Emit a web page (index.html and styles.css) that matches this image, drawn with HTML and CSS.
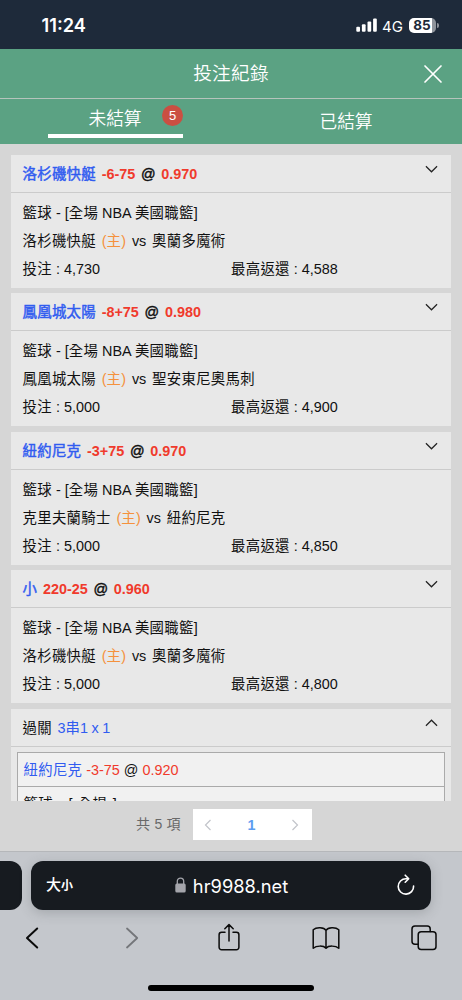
FILE: index.html
```
<!DOCTYPE html>
<html lang="zh-Hant">
<head>
<meta charset="utf-8">
<meta name="viewport" content="width=device-width, initial-scale=1">
<title>投注紀錄</title>
<link rel="stylesheet" href="styles.css">
</head>
<body>
<div class="phone">
  <div class="status">
    <span class="clock">11:24</span>
    <div class="status-right">
      <svg class="signal" width="22" height="14" viewBox="0 0 22 14" fill="#fff"><rect x="0.3" y="8.7" width="3.7" height="5" rx="1"/><rect x="5.9" y="6.2" width="3.7" height="7.5" rx="1"/><rect x="11.5" y="3.4" width="3.7" height="10.3" rx="1"/><rect x="17.1" y="0.4" width="3.7" height="13.3" rx="1"/></svg>
      <span class="network">4G</span>
      <div class="battery"><span class="level">85</span></div>
      <span class="battery-tip"></span>
    </div>
  </div>

  <header class="title-bar">
    <h1>投注紀錄</h1>
    <svg class="close" width="20" height="20" viewBox="0 0 20 20" fill="none" stroke="#fff" stroke-width="1.7" stroke-linecap="round"><path d="M2 2 18 18M18 2 2 18"/></svg>
  </header>
  <nav class="tabs">
    <div class="tab active"><span>未結算</span><span class="badge">5</span></div>
    <div class="tab"><span>已結算</span></div>
  </nav>

  <main class="list">
    <section class="card">
      <div class="card-head"><div class="pick"><span class="team blue">洛杉磯快艇</span> <b class="odds">-6-75</b> <span class="at">@</span> <b class="odds">0.970</b></div><svg class="chev" viewBox="0 0 14 8"><path d="M1 1 7 7 13 1"/></svg></div>
      <div class="card-body">
        <p><i>籃球</i> - [<i>全場</i> NBA <i>美國職籃</i>]</p>
        <p class="match"><i>洛杉磯快艇</i> <em>(<i>主</i>)</em> vs <i>奧蘭多魔術</i></p>
        <p class="money"><span><i>投注</i> : 4,730</span><span><i>最高返還</i> : 4,588</span></p>
      </div>
    </section>
    <section class="card">
      <div class="card-head"><div class="pick"><span class="team blue">鳳凰城太陽</span> <b class="odds">-8+75</b> <span class="at">@</span> <b class="odds">0.980</b></div><svg class="chev" viewBox="0 0 14 8"><path d="M1 1 7 7 13 1"/></svg></div>
      <div class="card-body">
        <p><i>籃球</i> - [<i>全場</i> NBA <i>美國職籃</i>]</p>
        <p class="match"><i>鳳凰城太陽</i> <em>(<i>主</i>)</em> vs <i>聖安東尼奧馬刺</i></p>
        <p class="money"><span><i>投注</i> : 5,000</span><span><i>最高返還</i> : 4,900</span></p>
      </div>
    </section>
    <section class="card">
      <div class="card-head"><div class="pick"><span class="team blue">紐約尼克</span> <b class="odds">-3+75</b> <span class="at">@</span> <b class="odds">0.970</b></div><svg class="chev" viewBox="0 0 14 8"><path d="M1 1 7 7 13 1"/></svg></div>
      <div class="card-body">
        <p><i>籃球</i> - [<i>全場</i> NBA <i>美國職籃</i>]</p>
        <p class="match"><i>克里夫蘭騎士</i> <em>(<i>主</i>)</em> vs <i>紐約尼克</i></p>
        <p class="money"><span><i>投注</i> : 5,000</span><span><i>最高返還</i> : 4,850</span></p>
      </div>
    </section>
    <section class="card">
      <div class="card-head"><div class="pick"><span class="team blue">小</span> <b class="odds">220-25</b> <span class="at">@</span> <b class="odds">0.960</b></div><svg class="chev" viewBox="0 0 14 8"><path d="M1 1 7 7 13 1"/></svg></div>
      <div class="card-body">
        <p><i>籃球</i> - [<i>全場</i> NBA <i>美國職籃</i>]</p>
        <p class="match"><i>洛杉磯快艇</i> <em>(<i>主</i>)</em> vs <i>奧蘭多魔術</i></p>
        <p class="money"><span><i>投注</i> : 5,000</span><span><i>最高返還</i> : 4,800</span></p>
      </div>
    </section>
    <section class="card parlay">
      <div class="card-head"><div class="pick"><i>過關</i> <span class="combo blue">3串1 x 1</span></div><svg class="chev" viewBox="0 0 14 8"><path d="M1 7 7 1 13 7"/></svg></div>
      <div class="legs">
        <div class="leg-head"><i class="blue">紐約尼克</i> <span class="odds">-3-75</span> @ <span class="odds">0.920</span></div>
        <div class="leg-body"><i>籃球</i> - [ <i>全場</i> ]</div>
      </div>
    </section>
  </main>

  <div class="pagination">
    <span class="total">共 5 項</span>
    <div class="pager">
      <svg width="8" height="12" viewBox="0 0 8 12"><path d="M6.5 1 1.5 6 6.5 11"/></svg>
      <span>1</span>
      <svg width="8" height="12" viewBox="0 0 8 12"><path d="M1.5 1 6.5 6 1.5 11"/></svg>
    </div>
  </div>

  <footer class="browser">
    <div class="address-row">
      <div class="prev-tab"></div>
      <div class="address">
        <span class="text-size">大<small>小</small></span>
        <span class="url"><svg width="11" height="16" viewBox="0 0 11 16"><rect x="0.3" y="6.5" width="10.4" height="9" rx="1.6" fill="#a4a5ab"/><path d="M2.3 7V4.3a3.2 3.2 0 0 1 6.4 0V7" fill="none" stroke="#a4a5ab" stroke-width="1.3"/></svg>hr9988.net</span>
        <svg class="reload" width="20" height="22" viewBox="0 0 20 22" fill="none" stroke="#fff" stroke-width="1.6" stroke-linecap="round" stroke-linejoin="round"><path d="M12.4 4.7H10A7.7 7.7 0 1 0 17.6 12M9.2 1.2 12.7 4.7 9.2 8.2"/></svg>
      </div>
    </div>
    <div class="toolbar">
      <svg width="26" height="30" viewBox="0 0 26 30" stroke-width="2"><path d="M18.2 5.5 8 15 18.2 24.5"/></svg>
      <svg class="dim" width="26" height="30" viewBox="0 0 26 30" stroke-width="1.8"><path d="M8 5.5 18.2 15 8 24.5"/></svg>
      <svg width="26" height="30" viewBox="0 0 26 30" stroke-width="1.5"><path d="M9 9.2H5.6a2.5 2.5 0 0 0-2.5 2.5v12.6a2.5 2.5 0 0 0 2.5 2.5h14.8a2.5 2.5 0 0 0 2.5-2.5V11.7a2.5 2.5 0 0 0-2.5-2.5H17M13 18V1.8M8.8 5.8 13 1.6l4.2 4.2"/></svg>
      <svg width="28" height="30" viewBox="0 0 28 30" stroke-width="1.5"><path d="M14 7.4C12 4.2 4.5 3.8 1.2 6.8V25.3C4.4 22.5 11.5 22.3 14 25.3 16.5 22.3 23.6 22.5 26.8 25.3V6.8C23.5 3.8 16 4.2 14 7.4V25"/></svg>
      <svg width="26" height="30" viewBox="0 0 26 30" stroke-width="1.5"><rect x="7.2" y="8.8" width="17.8" height="17.8" rx="3"/><path d="M7 21.2H4a3 3 0 0 1-3-3V6a3 3 0 0 1 3-3h12.2a3 3 0 0 1 3 3v2.6"/></svg>
    </div>
    <div class="home"></div>
  </footer>
</div>
</body>
</html>
```

FILE: styles.css
```
* { box-sizing: border-box; }
body {
  margin: 0;
  background: #d6d6d6;
  font-family: "Liberation Sans", "Noto Sans CJK TC", sans-serif;
  font-size: 14.4px;
  color: #111;
}
h1, p { margin: 0; font-weight: 400; }
i, em { font-style: normal; }
i, .team { letter-spacing: 0.3px; }
svg { display: block; flex: none; }
.phone { width: 462px; height: 1000px; display: flex; flex-direction: column; overflow: hidden; }

.status {
  height: 49px; flex: none; background: #1e2a3a; color: #fff;
  display: flex; justify-content: space-between; padding: 0 23px 0 41.5px;
  font-family: Inter, sans-serif;
}
.clock { font-size: 18.2px; font-weight: 600; line-height: 51px; letter-spacing: 0; }
.status-right { display: flex; align-items: center; padding-top: 1px; }
.network { font-size: 15px; margin: 2px 6px 0 4px; }
.battery {
  width: 27px; height: 15px; border-radius: 5px;
  background: linear-gradient(90deg, #fff 0 23px, #8e949c 23px);
}
.level { display: block; color: #1e2a3a; font-size: 13.5px; font-weight: 700; line-height: 15px; text-align: center; padding-right: 1px; }
.battery-tip { width: 2px; height: 5px; border-radius: 0 2px 2px 0; background: #8e949c; margin-left: 1px; }

.title-bar {
  height: 50px; flex: none; background: #5ba283; color: #fff;
  display: grid; grid-template-columns: 40px 1fr 40px; align-items: center;
  border-bottom: 1px solid #b5c4bc;
}
.title-bar h1 { grid-column: 2; text-align: center; font-size: 18.7px; font-weight: 350; line-height: 50px; letter-spacing: 0.2px; }
.close { margin: -1px 0 0 1px; }

.tabs { height: 45px; flex: none; background: #5ba283; color: #fff; display: grid; grid-template-columns: 1fr 1fr; font-size: 17.7px; font-weight: 350; }
.tab { display: flex; justify-content: center; line-height: 47px; }
.tab.active { position: relative; height: 39px; margin: 0 48px; border-bottom: 4px solid #fff; line-height: 40px; }
.tab > span:first-child { margin-right: 1px; }
.badge {
  position: absolute; right: 0; top: 6px; width: 21px; height: 21px; border-radius: 50%;
  background: #cb4f42; text-align: center; font-size: 13px; line-height: 21px;
}

.list { height: 657px; flex: none; padding: 11px 11px 0; overflow: hidden; }
.card { height: 133px; margin-bottom: 5.4px; background: #e8e8e8; }
.card-head { height: 38px; border-bottom: 1px solid #cbcbcb; display: flex; justify-content: space-between; padding: 0 13px 0 11.5px; line-height: 38px; }
.pick { word-spacing: 1.7px; }
.team { -webkit-text-stroke: 0.45px currentColor; }
.at { -webkit-text-stroke: 0.45px currentColor; }
.combo { word-spacing: -0.5px; }
.blue { color: #315cf0; }
.odds { color: #f03a2c; }
.chev { width: 13px; height: 8px; margin-top: 10px; fill: none; stroke: #222; stroke-width: 1.3; }
.card-body { padding: 6px 11.5px 0; line-height: 28px; white-space: nowrap; }
.match { word-spacing: 1.8px; }
.match em { color: #f5913c; }
.money { display: grid; grid-template-columns: 208.5px 1fr; }

.parlay { height: 300px; }
.legs { margin: 5px 6px 0; border: 1px solid #aaa; background: #f1f1f1; }
.leg-head { height: 34px; padding-left: 5.5px; line-height: 35px; border-bottom: 1px solid #aaa; word-spacing: 0; }
.leg-body { padding-left: 5.5px; line-height: 34px; word-spacing: 1.4px; }

.pagination { height: 50px; flex: none; padding: 8px 150px 0 136px; display: flex; justify-content: space-between; }
.total { color: #696969; font-size: 14px; line-height: 31px; word-spacing: 0.5px; }
.pager { width: 119px; height: 31px; background: #fff; display: flex; align-items: center; justify-content: space-between; padding: 0 13px 0 11px; }
.pager svg { fill: none; stroke: #c2c4ca; stroke-width: 1.2; }
.pager span { color: #5c9df0; font-weight: 700; }

.browser { flex: 1; background: #c4c7cc; border-top: 1px solid #b5b7ba; display: flex; flex-direction: column; }
.address-row { display: flex; gap: 9px; padding-top: 9px; }
.prev-tab { width: 22px; height: 49px; background: #171b20; border-radius: 0 12px 12px 0; }
.address {
  width: 400px; height: 49px; border-radius: 12px; background: #171b20; color: #fff;
  display: grid; grid-template-columns: 60px 1fr 60px; align-items: center;
  box-shadow: 0 3px 12px rgba(70, 75, 80, 0.25);
}
.text-size { padding-left: 15px; font-size: 15px; font-weight: 500; white-space: nowrap; line-height: 46px; }
.text-size small { font-size: 12px; font-weight: 700; }
.url { display: flex; align-items: center; justify-content: center; gap: 7px; padding-left: 1px; font: 18.3px Inter, sans-serif; letter-spacing: 0; }
.url svg { margin-top: -2px; }
.reload { justify-self: end; margin: -2px 15px 0 0; }
.toolbar { display: grid; grid-template-columns: 100px 96.5px 96.5px 98.5px 26px; padding: 13px 0 0 19px; }
.toolbar svg { fill: none; stroke: #0b0b0b; stroke-linecap: round; stroke-linejoin: round; }
.toolbar .dim { stroke: #74767a; }
.home { width: 166px; height: 6px; border-radius: 3px; background: #000; margin: 32px auto 0; }
```
